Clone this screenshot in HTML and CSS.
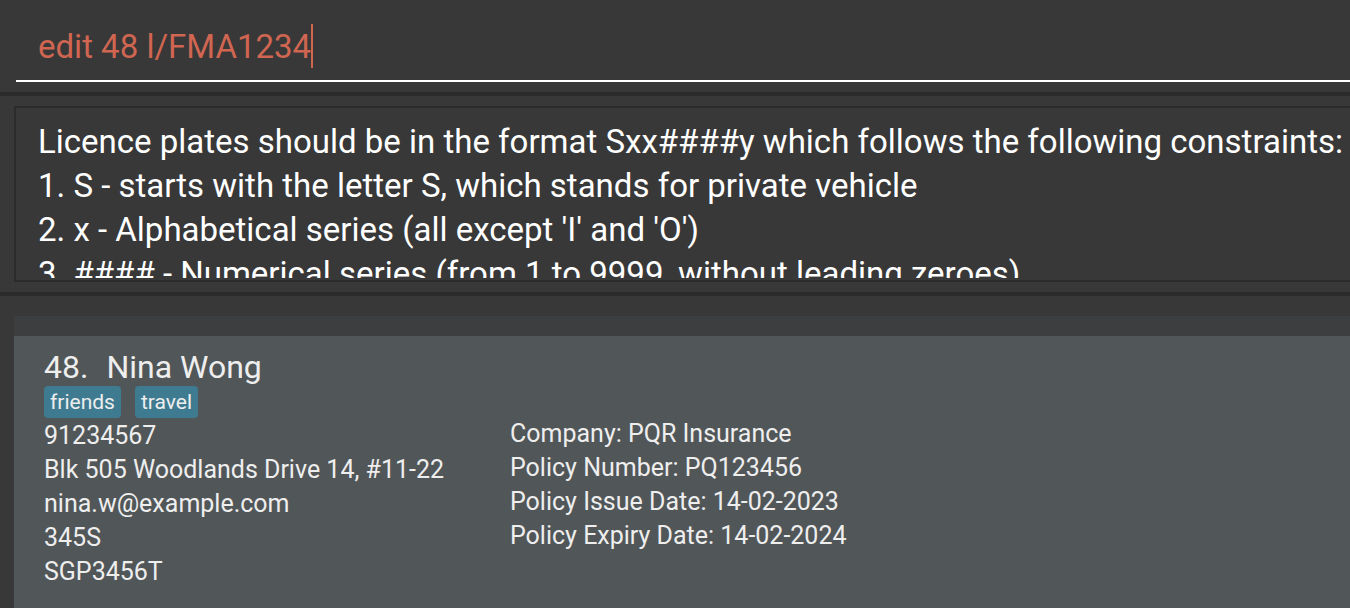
FILE: index.html
```html
<!DOCTYPE html>
<html lang="en">
<head>
<meta charset="utf-8">
<title>Client list</title>
<link rel="stylesheet" href="styles.css">
</head>
<body>
<form class="command-bar">
  <div class="command-line">
    <input class="command-input" type="text" value="edit 48 l/FMA1234" aria-label="Command" spellcheck="false" autocomplete="off">
    <span class="caret"></span>
  </div>
</form>
<section class="result-pane">
  <div class="result-box">
    <textarea class="result-text" readonly wrap="off" aria-label="Result" spellcheck="false">Licence plates should be in the format Sxx####y which follows the following constraints:
1. S - starts with the letter S, which stands for private vehicle
2. x - Alphabetical series (all except 'I' and 'O')
3. #### - Numerical series (from 1 to 9999, without leading zeroes)</textarea>
  </div>
</section>
<main class="list-pane">
  <article class="card">
    <div class="person">
      <h2 class="name"><span>48.</span><span>Nina Wong</span></h2>
      <ul class="tags">
        <li class="tag">friends</li>
        <li class="tag">travel</li>
      </ul>
      <p class="row">91234567</p>
      <p class="row">Blk 505 Woodlands Drive 14, #11-22</p>
      <p class="row">nina.w@example.com</p>
      <p class="row">345S</p>
      <p class="row">SGP3456T</p>
    </div>
    <div class="policy">
      <p class="row">Company: PQR Insurance</p>
      <p class="row">Policy Number: PQ123456</p>
      <p class="row">Policy Issue Date: 14-02-2023</p>
      <p class="row">Policy Expiry Date: 14-02-2024</p>
    </div>
  </article>
</main>
</body>
</html>
```
FILE: styles.css
```css
* {
  box-sizing: border-box;
}

body {
  margin: 0;
  min-height: 100vh;
  display: flex;
  flex-direction: column;
  overflow-x: hidden;
  background: #383838;
  color: #fff;
  font-family: Roboto, "Liberation Sans", sans-serif;
}

h2, p, ul {
  margin: 0;
  padding: 0;
  font-weight: 400;
}

.command-bar {
  padding: 24px 0 10px 16px;
  border-bottom: 4px solid #2b2b2b;
}

.command-line {
  display: flex;
  padding: 0 0 12px 22px;
  border-bottom: 2px solid #fff;
}

.command-input {
  field-sizing: content;
  padding: 2px 0 0;
  border: 0;
  outline: 0;
  background: transparent;
  color: #d06651;
  caret-color: transparent;
  font: 400 33px/42px Roboto, "Liberation Sans", sans-serif;
}

.caret {
  width: 2px;
  height: 44px;
  background: #d06651;
}

.result-pane {
  padding: 10px 0 10px 14px;
  border-bottom: 4px solid #2b2b2b;
}

.result-box {
  padding-bottom: 2px;
  border: 2px solid #2b2b2b;
  border-right: 0;
}

.result-text {
  display: block;
  width: 100%;
  height: 170px;
  padding: 12px 0 0 22px;
  border: 0;
  outline: 0;
  resize: none;
  overflow: hidden;
  background: transparent;
  color: #fff;
  font: 400 33px/44px Roboto, "Liberation Sans", sans-serif;
}

.list-pane {
  flex: 1;
  display: flex;
  padding: 20px 0 0 14px;
}

.card {
  flex: 1;
  display: grid;
  grid-template-columns: 466px 1fr;
  padding: 12px 0 18px 30px;
  border-top: 20px solid #3c3e3f;
  background: #515658;
  color: #eee;
}

.name {
  display: flex;
  gap: 18px;
  font-size: 32px;
  line-height: 38px;
}

.tags {
  display: flex;
  gap: 14px;
  margin-bottom: 1px;
  list-style: none;
}

.tag {
  padding: 0 6px;
  border-radius: 4px;
  background: #3e7b91;
  font-size: 21px;
  line-height: 32px;
}

.row {
  font-size: 25px;
  line-height: 34px;
  white-space: nowrap;
}

.policy {
  padding-top: 69px;
}
```
